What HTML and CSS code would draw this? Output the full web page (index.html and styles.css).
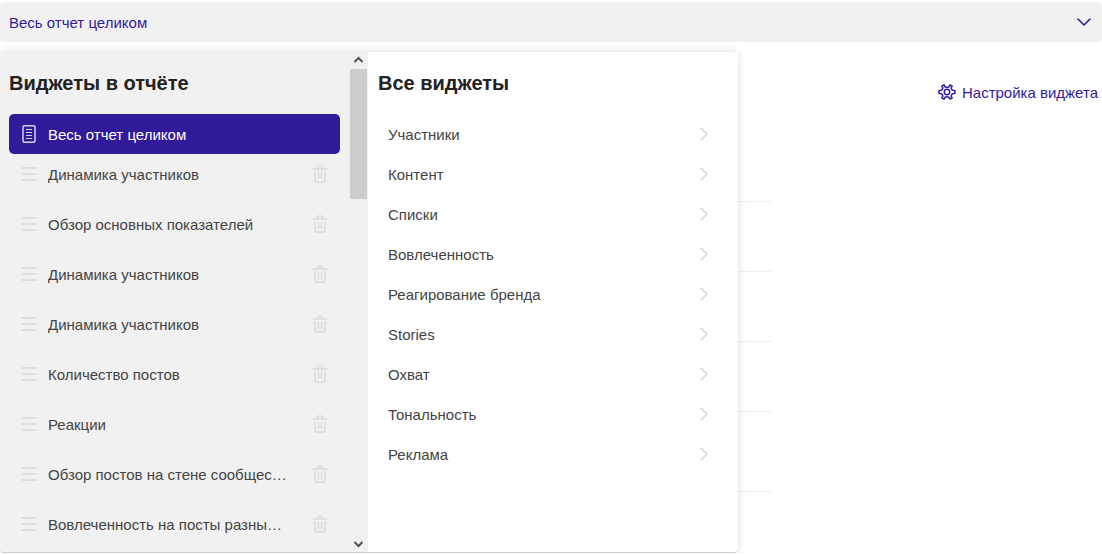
FILE: index.html
```html
<!DOCTYPE html>
<html lang="ru">
<head>
<meta charset="utf-8">
<meta name="viewport" content="width=device-width, initial-scale=1">
<title>Виджеты</title>
<link rel="stylesheet" href="styles.css">
</head>
<body>
<svg class="sprite" aria-hidden="true">
  <symbol id="grip" viewBox="0 0 16 16"><path d="M.5 2h15M.5 8h15M.5 14h15" fill="none" stroke="currentColor" stroke-width="2"/></symbol>
  <symbol id="trash" viewBox="0 0 16 18"><path d="M1 4h14M5.500 3.500V2.500a1.500 1.500 0 0 1 1.500-1.500h2a1.500 1.500 0 0 1 1.500 1.500v1M3 6.500v9a1.500 1.500 0 0 0 1.500 1.500h7a1.500 1.500 0 0 0 1.500-1.500v-9M6.500 7.500v6M9.500 7.500v6" fill="none" stroke="currentColor" stroke-width="1.500" stroke-linecap="round"/></symbol>
  <symbol id="next" viewBox="0 0 8 14"><path d="M1 1l6 6-6 6" fill="none" stroke="currentColor" stroke-width="1.500" stroke-linecap="round" stroke-linejoin="round"/></symbol>
</svg>
<button class="picker" type="button" aria-expanded="true">
  <span class="label">Весь отчет целиком</span>
  <svg width="14" height="8" viewBox="0 0 14 8"><path d="M1 1l6 6 6-6" fill="none" stroke="currentColor" stroke-width="1.600" stroke-linecap="round" stroke-linejoin="round"/></svg>
</button>
<main class="page">
  <section class="menu">
    <div class="report">
      <div class="report-body">
        <h2 class="title">Виджеты в отчёте</h2>
        <button class="current" type="button">
          <svg class="icon" width="16" height="20" viewBox="0 0 16 20"><rect x="2" y="1.700" width="12" height="16.600" rx="1.500" fill="none" stroke="currentColor" stroke-width="1.500"/><path d="M5 5.500h6M5 8.500h6M5 11.500h6M5 14.500h6" stroke="currentColor" stroke-width="1.200"/></svg>
          <span class="label">Весь отчет целиком</span>
        </button>
        <ul class="list list-report">
          <li class="item"><svg class="icon" width="16" height="16"><use href="#grip"/></svg><span class="label name">Динамика участников</span><button class="remove" type="button" aria-label="Удалить"><svg width="16" height="18"><use href="#trash"/></svg></button></li>
          <li class="item"><svg class="icon" width="16" height="16"><use href="#grip"/></svg><span class="label name">Обзор основных показателей</span><button class="remove" type="button" aria-label="Удалить"><svg width="16" height="18"><use href="#trash"/></svg></button></li>
          <li class="item"><svg class="icon" width="16" height="16"><use href="#grip"/></svg><span class="label name">Динамика участников</span><button class="remove" type="button" aria-label="Удалить"><svg width="16" height="18"><use href="#trash"/></svg></button></li>
          <li class="item"><svg class="icon" width="16" height="16"><use href="#grip"/></svg><span class="label name">Динамика участников</span><button class="remove" type="button" aria-label="Удалить"><svg width="16" height="18"><use href="#trash"/></svg></button></li>
          <li class="item"><svg class="icon" width="16" height="16"><use href="#grip"/></svg><span class="label name">Количество постов</span><button class="remove" type="button" aria-label="Удалить"><svg width="16" height="18"><use href="#trash"/></svg></button></li>
          <li class="item"><svg class="icon" width="16" height="16"><use href="#grip"/></svg><span class="label name">Реакции</span><button class="remove" type="button" aria-label="Удалить"><svg width="16" height="18"><use href="#trash"/></svg></button></li>
          <li class="item"><svg class="icon" width="16" height="16"><use href="#grip"/></svg><span class="label name">Обзор постов на стене сообщества</span><button class="remove" type="button" aria-label="Удалить"><svg width="16" height="18"><use href="#trash"/></svg></button></li>
          <li class="item"><svg class="icon" width="16" height="16"><use href="#grip"/></svg><span class="label name">Вовлеченность на посты разных типов</span><button class="remove" type="button" aria-label="Удалить"><svg width="16" height="18"><use href="#trash"/></svg></button></li>
        </ul>
      </div>
      <div class="scroll" aria-hidden="true">
        <svg class="scroll-arrow" width="17" height="17" viewBox="0 0 17 17"><path d="M4.500 10l4-4 4 4" fill="none" stroke="currentColor" stroke-width="2"/></svg>
        <div class="scroll-thumb"></div>
        <svg class="scroll-arrow scroll-down" width="17" height="17" viewBox="0 0 17 17"><path d="M4.500 7l4 4 4-4" fill="none" stroke="currentColor" stroke-width="2"/></svg>
      </div>
    </div>
    <div class="all">
      <h2 class="title">Все виджеты</h2>
      <ul class="list">
        <li><button class="group" type="button"><span class="label">Участники</span><svg width="8" height="14"><use href="#next"/></svg></button></li>
        <li><button class="group" type="button"><span class="label">Контент</span><svg width="8" height="14"><use href="#next"/></svg></button></li>
        <li><button class="group" type="button"><span class="label">Списки</span><svg width="8" height="14"><use href="#next"/></svg></button></li>
        <li><button class="group" type="button"><span class="label">Вовлеченность</span><svg width="8" height="14"><use href="#next"/></svg></button></li>
        <li><button class="group" type="button"><span class="label">Реагирование бренда</span><svg width="8" height="14"><use href="#next"/></svg></button></li>
        <li><button class="group" type="button"><span class="label">Stories</span><svg width="8" height="14"><use href="#next"/></svg></button></li>
        <li><button class="group" type="button"><span class="label">Охват</span><svg width="8" height="14"><use href="#next"/></svg></button></li>
        <li><button class="group" type="button"><span class="label">Тональность</span><svg width="8" height="14"><use href="#next"/></svg></button></li>
        <li><button class="group" type="button"><span class="label">Реклама</span><svg width="8" height="14"><use href="#next"/></svg></button></li>
      </ul>
    </div>
  </section>
  <div class="toolbar">
    <button class="settings" type="button">
      <svg width="18" height="18" viewBox="0 0 18 18" fill="none" stroke="currentColor" stroke-width="1.500" stroke-linejoin="round"><circle cx="9" cy="9" r="2.700"/><path d="M6.900 3.600 6 1.800 3.800 3.100 4.900 4.900Q4.700 6.700 3 7.200L1 7.700v2.600l2 .5q1.700.5 1.900 2.300l-1.100 1.800L6 16.200l.9-1.800q2.100-1.400 4.200 0l.9 1.800 2.200-1.300-1.100-1.800q.2-1.800 1.900-2.300l2-.5V7.700l-2-.5q-1.700-.5-1.900-2.300l1.100-1.800L12 1.800l-.9 1.800q-2.100 1.400-4.200 0z"/></svg>
      <span class="label">Настройка виджета</span>
    </button>
  </div>
  <div class="rows">
    <div class="row"></div>
    <div class="row"></div>
    <div class="row"></div>
    <div class="row"></div>
    <div class="row row-tall"></div>
  </div>
</main>
</body>
</html>
```
FILE: styles.css
```css
* {
  box-sizing: border-box;
}

body {
  margin: 0;
  padding-top: 2px;
  background: #fff;
  color: #444;
  font: 15px/20px "Liberation Sans", Arial, sans-serif;
}

button {
  margin: 0;
  padding: 0;
  border: 0;
  background: none;
  color: inherit;
  font: inherit;
  text-align: left;
  cursor: pointer;
}

svg {
  display: block;
  flex: none;
}

.sprite {
  position: absolute;
  width: 0;
  height: 0;
}

.label {
  padding-top: 2px;
}

.picker {
  display: flex;
  align-items: center;
  justify-content: space-between;
  width: 100%;
  height: 40px;
  padding: 0 11px 0 9px;
  border-radius: 4px;
  background: #f1f1f1;
  color: #311b9b;
}

.page {
  position: relative;
  padding-top: 10px;
  min-height: 511px;
}

.menu {
  position: absolute;
  z-index: 1;
  top: 10px;
  left: 0;
  display: flex;
  width: 67%;
  height: 500px;
  overflow: hidden;
  border-radius: 4px;
  background: #fff;
  box-shadow: 0 1px 0 #ccc, 0 0 8px rgba(0, 0, 0, 0.15);
}

.report {
  display: flex;
  flex: 0 0 368px;
  min-width: 0;
  background: #f1f1f1;
}

.report-body {
  flex: 1;
  min-width: 0;
  padding: 16px 10px 0 9px;
}

.title {
  margin: 0 0 16px;
  color: #222;
  font-size: 20px;
  line-height: 30px;
}

.current {
  display: flex;
  align-items: center;
  width: 100%;
  height: 40px;
  padding: 0 12px;
  border-radius: 5px;
  background: #311b9b;
  color: #fff;
}

.icon {
  margin-right: 11px;
}

.current .icon {
  color: #d6d1eb;
}

.list {
  margin: 0;
  padding: 0;
  list-style: none;
}

.list-report {
  display: grid;
  grid-template-columns: minmax(0, 1fr);
  gap: 10px;
}

.item {
  display: flex;
  align-items: center;
  height: 40px;
  padding: 0 12px;
}

.item .icon {
  color: #dfdfdf;
}

.name {
  flex: 1;
  min-width: 0;
  margin-right: 25px;
  overflow: hidden;
  text-overflow: ellipsis;
  white-space: nowrap;
}

.remove {
  color: #dadada;
}

.scroll {
  display: flex;
  flex: none;
  flex-direction: column;
  width: 17px;
  margin-right: 1px;
  background: #f0f0f0;
}

.scroll-arrow {
  color: #505050;
}

.scroll-thumb {
  height: 130px;
  background: #cdcdcd;
}

.scroll-down {
  margin-top: auto;
}

.all {
  flex: 1;
  min-width: 0;
  padding: 16px 10px 0;
}

.group {
  display: flex;
  align-items: center;
  justify-content: space-between;
  width: 100%;
  height: 40px;
  padding: 0 20px 0 10px;
}

.group svg {
  color: #d5d5d5;
}

.toolbar {
  display: flex;
  justify-content: flex-end;
  padding: 29px 4px 29px 0;
}

.settings {
  display: flex;
  align-items: center;
  gap: 6px;
  color: #311b9b;
}

.rows {
  width: 70%;
}

.row {
  height: 70px;
  border-bottom: 1px solid #eee;
}

.row-tall {
  height: 80px;
}
```
